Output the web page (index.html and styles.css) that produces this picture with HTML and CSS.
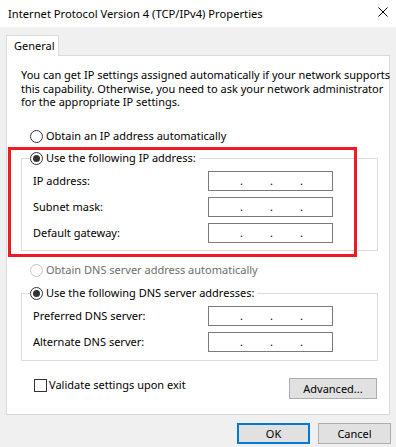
FILE: index.html
```html
<!DOCTYPE html>
<html lang="en">
<head>
<meta charset="utf-8">
<title>Internet Protocol Version 4 (TCP/IPv4) Properties</title>
<link rel="stylesheet" href="styles.css">
</head>
<body>
<div class="window">
  <div class="titlebar">
    <span class="title">Internet Protocol Version 4 (TCP/IPv4) Properties</span>
    <svg class="close" width="10" height="10" viewBox="0 0 10 10" aria-label="Close">
      <path d="M0.5 0.5 L9.5 9.5 M9.5 0.5 L0.5 9.5" stroke="#000" stroke-width="1" fill="none"/>
    </svg>
  </div>

  <div class="tabs">
    <div class="tab">General</div>
  </div>

  <div class="panel">
    <p class="intro">You can get IP settings assigned automatically if your network supports<br>this capability. Otherwise, you need to ask your network administrator<br>for the appropriate IP settings.</p>

    <div class="option"><span class="radio"></span><span>Obtain an IP address automatically</span></div>

    <div class="group group-ip">
      <div class="legend"><span class="radio checked"></span><span>Use the following IP address:</span></div>
      <div class="rows">
        <div class="row"><span class="label">IP address:</span><div class="ip"><span class="seg first"></span><span class="dot">.</span><span class="seg"></span><span class="dot">.</span><span class="seg"></span><span class="dot">.</span><span class="seg"></span></div></div>
        <div class="row"><span class="label">Subnet mask:</span><div class="ip"><span class="seg first"></span><span class="dot">.</span><span class="seg"></span><span class="dot">.</span><span class="seg"></span><span class="dot">.</span><span class="seg"></span></div></div>
        <div class="row"><span class="label">Default gateway:</span><div class="ip"><span class="seg first"></span><span class="dot">.</span><span class="seg"></span><span class="dot">.</span><span class="seg"></span><span class="dot">.</span><span class="seg"></span></div></div>
      </div>
    </div>

    <div class="option disabled"><span class="radio"></span><span>Obtain DNS server address automatically</span></div>

    <div class="group group-dns">
      <div class="legend"><span class="radio checked"></span><span>Use the following DNS server addresses:</span></div>
      <div class="rows">
        <div class="row"><span class="label">Preferred DNS server:</span><div class="ip"><span class="seg first"></span><span class="dot">.</span><span class="seg"></span><span class="dot">.</span><span class="seg"></span><span class="dot">.</span><span class="seg"></span></div></div>
        <div class="row"><span class="label">Alternate DNS server:</span><div class="ip"><span class="seg first"></span><span class="dot">.</span><span class="seg"></span><span class="dot">.</span><span class="seg"></span><span class="dot">.</span><span class="seg"></span></div></div>
      </div>
    </div>

    <div class="bottom">
      <div class="check"><span class="box"></span><span>Validate settings upon exit</span></div>
      <div class="btn advanced">Advanced...</div>
    </div>
  </div>

  <div class="actions">
    <div class="btn default">OK</div>
    <div class="btn">Cancel</div>
  </div>

  <div class="highlight"></div>
</div>
</body>
</html>
```

FILE: styles.css
```css
* { box-sizing: border-box; }

html, body {
  margin: 0;
  padding: 0;
}

body {
  width: 396px;
  height: 447px;
  overflow: hidden;
  background: #f0f0f0;
  font-family: "Segoe UI", "Noto Sans", "Open Sans", sans-serif;
  font-size: 11px;
  line-height: 16px;
  color: #000;
}

.window {
  position: relative;
  width: 396px;
  height: 447px;
}

.titlebar {
  height: 27px;
  background: #fff;
  display: flex;
  align-items: center;
  justify-content: space-between;
  padding: 0 8px 0 8px;
}

.title {
  white-space: nowrap;
  font-size: 11.2px;
}

.close {
  display: block;
  margin-top: -3px;
}

.tabs {
  display: flex;
  padding: 8px 6px 0 6px;
}

.tab {
  position: relative;
  z-index: 1;
  width: 53px;
  height: 21px;
  margin-bottom: -1px;
  background: #fff;
  border: 1px solid #d9d9d9;
  border-bottom: none;
  padding-left: 7px;
  line-height: 19px;
}

.panel {
  margin: 0 6px;
  background: #fff;
  border: 1px solid #d9d9d9;
  padding: 12px 11px 15px 14px;
}

.intro {
  margin: 0;
  line-height: 13.5px;
  white-space: nowrap;
}

.option,
.legend,
.check {
  display: flex;
  align-items: center;
  height: 16px;
  white-space: nowrap;
}

.option {
  margin-top: 19.5px;
  margin-left: 9px;
}

.option.disabled {
  margin-top: 11px;
  color: #6d6d6d;
}

.radio {
  width: 13px;
  height: 13px;
  border: 1px solid #333;
  border-radius: 50%;
  background: #fff;
  margin-right: 3px;
  display: flex;
  align-items: center;
  justify-content: center;
  flex: none;
}

.option.disabled .radio {
  border-color: #c4c4c4;
}

.radio.checked::after {
  content: "";
  width: 7px;
  height: 7px;
  border-radius: 50%;
  background: #333;
}

.group {
  border: 1px solid #dcdcdc;
  padding: 0 0 7px 0;
}

.group-ip {
  margin-top: 14px;
}

.group-dns {
  margin-top: 15px;
  padding-bottom: 8px;
}

.legend {
  width: fit-content;
  background: #fff;
  margin: -9px 0 5px 8px;
  padding-right: 3px;
}

.rows {
  display: flex;
  flex-direction: column;
  gap: 6px;
  padding-left: 11px;
}

.row {
  display: flex;
  align-items: center;
  height: 20px;
}

.label {
  width: 175px;
  white-space: nowrap;
}

.ip {
  width: 125px;
  height: 20px;
  border: 1px solid #7a7a7a;
  display: flex;
  align-items: center;
  line-height: 18px;
}

.seg {
  width: 27px;
  flex: none;
}

.seg.first {
  width: 31px;
}

.dot {
  width: 3px;
  flex: none;
  text-align: center;
}

.bottom {
  display: flex;
  justify-content: space-between;
  align-items: flex-start;
  margin-top: 17px;
}

.check {
  margin-top: -1px;
  margin-left: 13px;
}

.box {
  width: 13px;
  height: 13px;
  border: 1px solid #333;
  background: #fff;
  margin-right: 2px;
  flex: none;
}

.btn {
  height: 21px;
  background: #e1e1e1;
  border: 1px solid #adadad;
  display: flex;
  align-items: center;
  justify-content: center;
  white-space: nowrap;
}

.advanced {
  width: 88px;
  margin-right: 1px;
}

.actions {
  display: flex;
  justify-content: flex-end;
  gap: 8px;
  padding: 8px 5px 0 0;
}

.actions .btn {
  width: 73px;
}

.btn.default {
  border: 2px solid #0078d7;
}

.highlight {
  position: absolute;
  left: 8px;
  top: 147px;
  width: 349px;
  height: 110px;
  border: 3px solid #ed1c24;
  pointer-events: none;
}
```
